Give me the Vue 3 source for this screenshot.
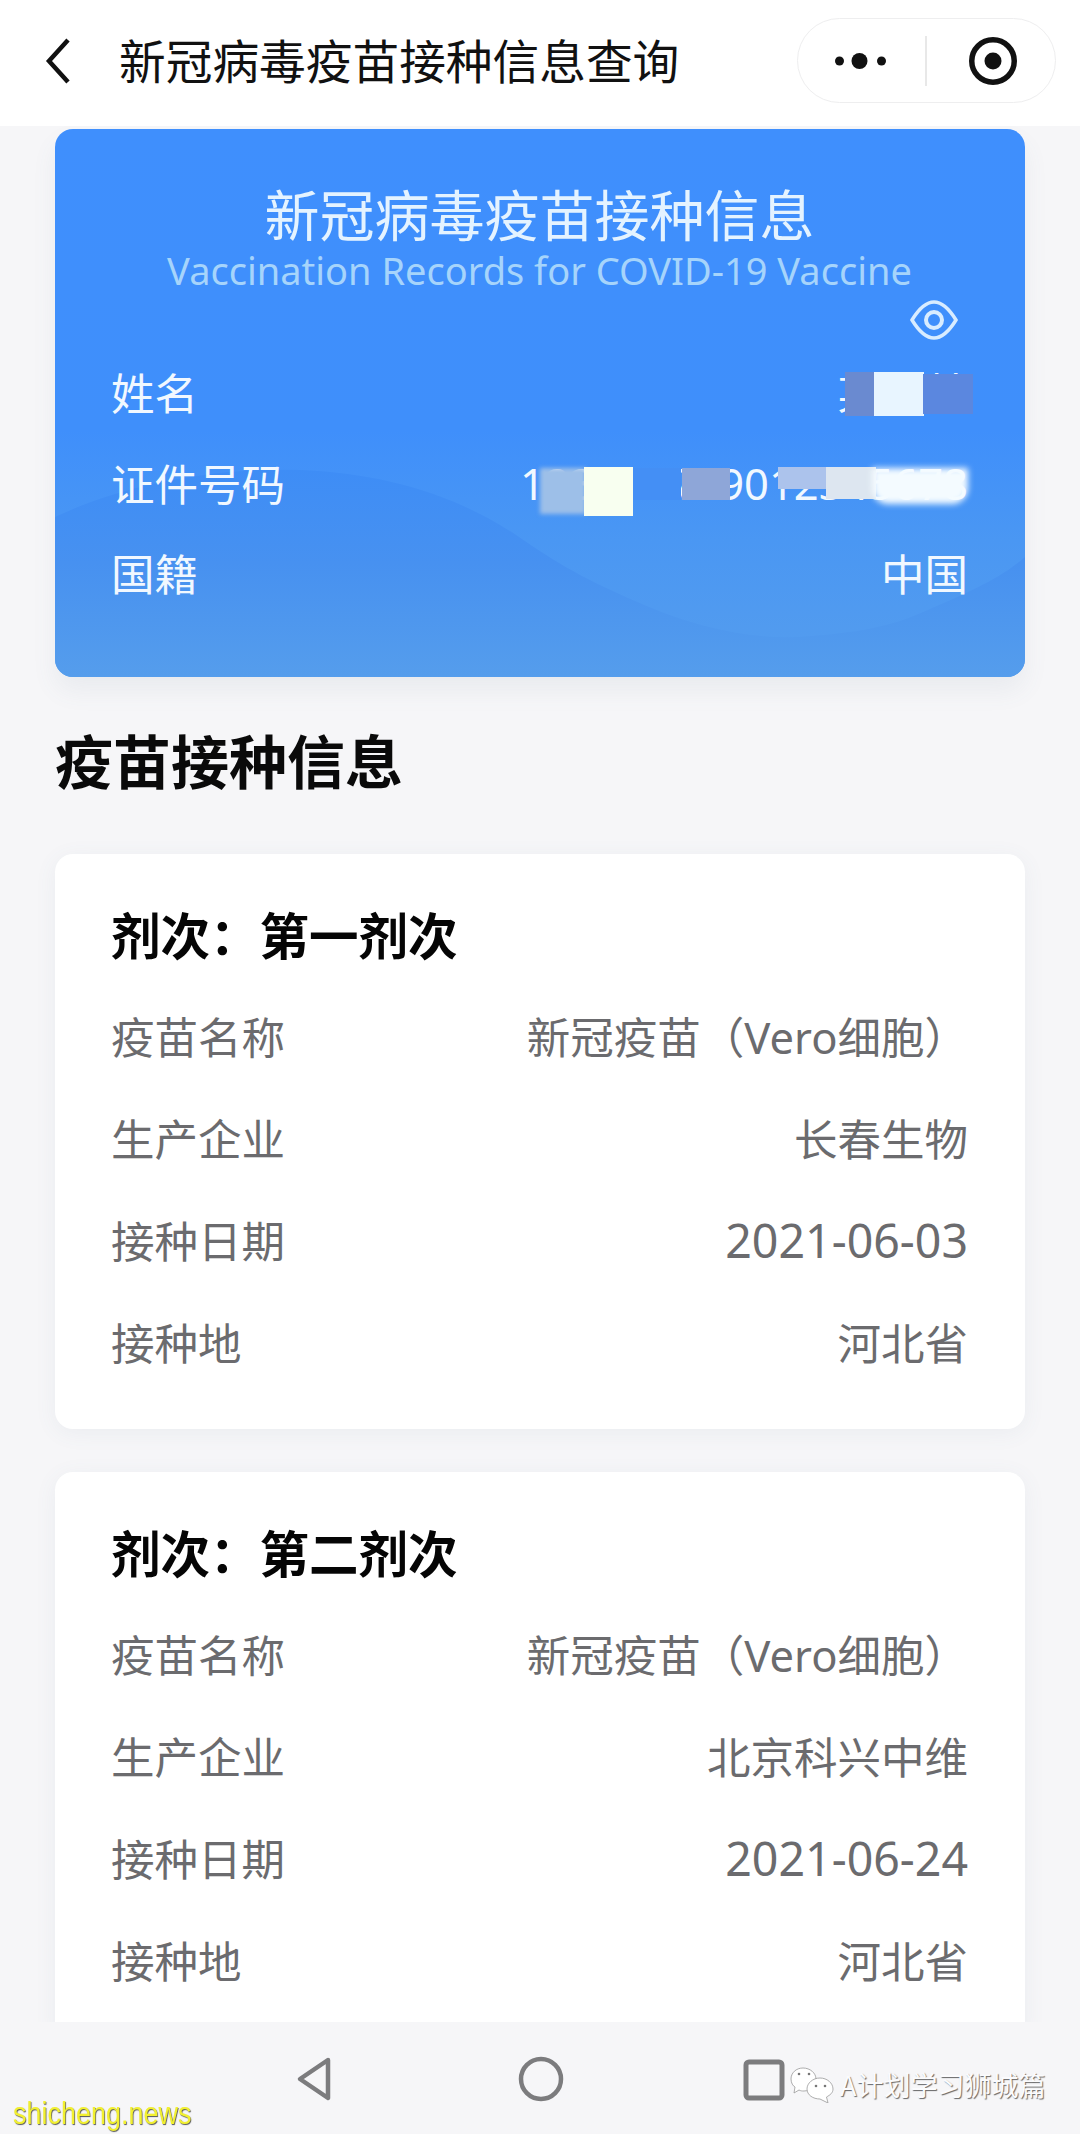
<script setup>
const doses = [
  {
    title: '剂次\uFF1A第一剂次',
    rows: [
      { label: '疫苗名称', parts: [['新冠疫苗\uFF08', ''], ['Vero', 'vero'], ['细胞\uFF09', '']] },
      { label: '生产企业', parts: [['长春生物', '']] },
      { label: '接种日期', parts: [['2021-06-03', 'latin']] },
      { label: '接种地', parts: [['河北省', '']] },
    ],
  },
  {
    title: '剂次\uFF1A第二剂次',
    rows: [
      { label: '疫苗名称', parts: [['新冠疫苗\uFF08', ''], ['Vero', 'vero'], ['细胞\uFF09', '']] },
      { label: '生产企业', parts: [['北京科兴中维', '']] },
      { label: '接种日期', parts: [['2021-06-24', 'latin']] },
      { label: '接种地', parts: [['河北省', '']] },
    ],
  },
]
</script>

<template>
  <div class="page">
    <header class="topbar">
      <svg class="back" viewBox="0 0 30 46" width="30" height="46"><path d="M25 2 L6 23 L25 44" fill="none" stroke="#111" stroke-width="4.5" stroke-linejoin="miter"/></svg>
      <h1 class="top-title">新冠病毒疫苗接种信息查询</h1>
      <div class="capsule">
        <svg viewBox="0 0 51 16" width="51" height="16"><circle cx="4.5" cy="8" r="4.5" fill="#111"/><circle cx="24.5" cy="8" r="8" fill="#111"/><circle cx="46.5" cy="8" r="4.5" fill="#111"/></svg>
        <span class="cap-sep"></span>
        <svg viewBox="0 0 50 50" width="50" height="50"><circle cx="25" cy="25" r="21.25" fill="none" stroke="#111" stroke-width="5.5"/><circle cx="25" cy="25" r="8.5" fill="#111"/></svg>
      </div>
    </header>

    <main class="main">
      <section class="id-card">
        <svg class="waves" viewBox="0 0 970 548" preserveAspectRatio="none">
          <defs>
            <linearGradient id="wa" x1="0" y1="0" x2="0" y2="1"><stop offset="0" stop-color="#3e8df6"/><stop offset=".45" stop-color="#4791f0"/><stop offset="1" stop-color="#559dec"/></linearGradient>
          </defs>
          <path d="M0 388 C70 355 160 338 247 341 C330 345 400 365 464 408 C510 440 540 455 594 478 C640 497 690 510 742 508 C790 505 830 500 866 484 C910 465 945 450 970 428 L970 548 L0 548 Z" fill="url(#wa)"/>
        </svg>
        <h2 class="id-title">新冠病毒疫苗接种信息</h2>
        <p class="id-sub">Vaccination Records for COVID-19 Vaccine</p>
        <div class="eye-row">
          <svg viewBox="0 0 48 40" width="48" height="40"><path d="M2 20 C10 7 17 2 24 2 C31 2 38 7 46 20 C38 33 31 38 24 38 C17 38 10 33 2 20 Z" fill="none" stroke="#d8ecff" stroke-width="3.5"/><circle cx="24" cy="20" r="8" fill="none" stroke="#d8ecff" stroke-width="4"/></svg>
        </div>
        <div class="id-row"><span>姓名</span>
          <span class="val-wrap">某某某
            <i class="mask m-name-a"></i><i class="mask m-name-b"></i><i class="mask m-name-c"></i>
          </span>
        </div>
        <div class="id-row"><span>证件号码</span>
          <span class="val-wrap id-num">123456789012345678
            <i class="mask m-id-a"></i><i class="mask m-id-b"></i><i class="mask m-id-c"></i><i class="mask m-id-d"></i><i class="mask m-id-e"></i><i class="mask m-id-f"></i><i class="mask m-id-g"></i>
          </span>
        </div>
        <div class="id-row last"><span>国籍</span><span class="val-wrap">中国</span></div>
      </section>

      <h2 class="section-title">疫苗接种信息</h2>

      <section v-for="d in doses" :key="d.title" class="dose">
        <h3 class="dose-title">{{ d.title }}</h3>
        <div v-for="r in d.rows" :key="r.label" class="dose-row">
          <span>{{ r.label }}</span>
          <span><span v-for="(p, i) in r.parts" :key="i" :class="p[1]">{{ p[0] }}</span></span>
        </div>
      </section>
    </main>

    <nav class="navbar">
      <svg viewBox="0 0 40 46" width="40" height="46"><path d="M34 4 L6 23 L34 42 Z" fill="none" stroke="#7c7c7e" stroke-width="4.5" stroke-linejoin="round"/></svg>
      <svg viewBox="0 0 46 46" width="46" height="46"><circle cx="23" cy="23" r="20" fill="none" stroke="#7c7c7e" stroke-width="4.5"/></svg>
      <svg class="nav-square" viewBox="0 0 42 42" width="42" height="42"><rect x="3" y="3" width="36" height="36" rx="3" fill="none" stroke="#7c7c7e" stroke-width="5"/></svg>
    </nav>

    <div class="wm-wechat">
      <svg viewBox="0 0 44 36" width="44" height="36"><path d="M13 1 C6 1 1 6 1 12 C1 16 3 19 5 20 L4 26 L9 23 C11 24 12 24 14 24 C21 24 26 18 26 12 C26 6 20 1 13 1 Z" fill="#fff" stroke="#999" stroke-width=".8"/><path d="M30 11 C23 11 17 16 17 22 C17 28 23 32 30 32 L38 36 L36.5 30 C40 28 43 26 43 22 C43 16 37 11 30 11 Z" fill="#fff" stroke="#999" stroke-width=".8"/><circle cx="9" cy="7" r="1.3" fill="#777"/><circle cx="19" cy="7" r="1.3" fill="#777"/><circle cx="26" cy="19" r="1.3" fill="#777"/><circle cx="35" cy="19" r="1.3" fill="#777"/></svg>
      <span>A计划学习狮城篇</span>
    </div>
    <div class="wm-site">shicheng.news</div>
  </div>
</template>

<style>
html, body { margin: 0; background: #f6f6f8; }
</style>

<style scoped>
.page {
  position: relative;
  width: 1080px;
  height: 2134px;
  display: flex;
  flex-direction: column;
  overflow: hidden;
  background: #f6f6f8;
  font-family: "Noto Sans CJK SC", "Noto Sans", sans-serif;
}
.topbar {
  flex: none;
  height: 126px;
  box-sizing: border-box;
  display: flex;
  align-items: center;
  padding: 0 24px 5px 43px;
  background: #fff;
}
.back { flex: none; margin-top: 1px; }
.top-title {
  margin: -3px 0 0 46px;
  flex: 1;
  font-size: 46.7px;
  line-height: 60px;
  font-weight: 400;
  color: #111;
  white-space: nowrap;
}
.capsule {
  flex: none;
  width: 259px;
  height: 85px;
  box-sizing: border-box;
  border: 1.5px solid #eeeeef;
  border-radius: 43px;
  display: flex;
  align-items: center;
  padding-left: 37px;
  background: #fff;
}
.cap-sep { flex: none; width: 1.5px; height: 50px; background: #e8e8e8; margin: 0 41px 0 39px; }
.main {
  flex: 1;
  min-height: 0;
  overflow: hidden;
  box-sizing: border-box;
  padding: 3px 55px 0;
}
.id-card {
  position: relative;
  height: 548px;
  box-sizing: border-box;
  padding: 53px 57px 0 56px;
  border-radius: 18px;
  overflow: hidden;
  color: #f1f8ff;
  background: linear-gradient(180deg, #3f8ffd 0%, #3f8ffb 55%, #4a97f3 75%, #559ded 100%);
  box-shadow: 0 14px 24px rgba(90, 110, 140, .08);
}
.waves { position: absolute; inset: 0; width: 100%; height: 100%; }
.id-title, .id-sub, .eye-row, .id-row { position: relative; }
.id-title {
  margin: 0;
  text-align: center;
  font-size: 55px;
  line-height: 60px;
  font-weight: 400;
  color: #e4f3ff;
  white-space: nowrap;
}
.id-sub {
  margin: 6px 0 0;
  text-align: center;
  font-family: "Noto Sans", sans-serif;
  font-size: 38px;
  line-height: 44px;
  color: #a6d4fb;
  white-space: nowrap;
}
.eye-row {
  display: flex;
  justify-content: flex-end;
  height: 40px;
  margin: 8px 10px 6px 0;
}
.id-row {
  display: flex;
  justify-content: space-between;
  align-items: center;
  height: 91px;
  font-size: 43.5px;
  line-height: 60px;
}
.id-row.last { margin-top: -1px; }
.val-wrap { position: relative; white-space: nowrap; }
.id-num { font-family: "Noto Sans", sans-serif; }
.mask { position: absolute; display: block; }
.m-name-a { left: 7px; width: 30px; top: 10px; height: 44px; background: #6a8ad0; }
.m-name-b { left: 36px; width: 50px; top: 10px; height: 44px; background: #e8f5ff; }
.m-name-c { left: 85px; width: 50px; top: 12px; height: 40px; background: #5b87df; }
.m-id-a { left: 20px; width: 46px; top: 15px; height: 46px; background: #9dbfe8; filter: blur(2px); }
.m-id-b { left: 64px; width: 49px; top: 14px; height: 49px; background: #f8fff0; }
.m-id-c { left: 113px; width: 48px; top: 15px; height: 32px; background: #448ff5; }
.m-id-d { left: 162px; width: 48px; top: 15px; height: 32px; background: #8ea6d8; }
.m-id-e { left: 258px; width: 48px; top: 14px; height: 22px; background: #acc3ec; }
.m-id-f { left: 306px; width: 50px; top: 14px; height: 32px; background: #dde6f0; }
.m-id-g { left: 352px; width: 96px; top: 15px; height: 36px; background: #f4fbff; filter: blur(3px); border-radius: 0 0 16px 16px; }
.section-title {
  margin: 47px 0 60px;
  font-size: 58px;
  line-height: 70px;
  font-weight: 700;
  color: #0a0a0a;
}
.dose {
  padding: 50px 57px 36px 56px;
  margin-bottom: 43px;
  background: #fff;
  border-radius: 18px;
  box-shadow: 0 4px 22px rgba(90, 110, 140, .07);
}
.dose-title {
  margin: 0 0 21px;
  font-size: 49.5px;
  line-height: 60px;
  font-weight: 700;
  color: #050505;
}
.dose-row {
  display: flex;
  justify-content: space-between;
  align-items: center;
  height: 102px;
  font-size: 43.5px;
  line-height: 60px;
  color: #6b6b6e;
  white-space: nowrap;
}
.latin { font-family: "Noto Sans", sans-serif; font-size: 46.5px; }
.vero { font-family: "Noto Sans", sans-serif; font-size: 43.5px; }
.navbar {
  flex: none;
  height: 112px;
  display: flex;
  align-items: flex-start;
  padding: 34px 0 0 294px;
  box-sizing: border-box;
  gap: 184px;
  background: #f6f6f8;
}
.nav-square { margin: 3px 0 0 -5px; }
.wm-wechat {
  position: absolute;
  left: 790px;
  top: 2067px;
  display: flex;
  align-items: center;
  gap: 6px;
  font-size: 27px;
  line-height: 36px;
  color: #fbfbfd;
  text-shadow: 1px 1px 1px #666;
  white-space: nowrap;
}
.wm-site {
  position: absolute;
  left: 13px;
  top: 2094px;
  font-family: "Liberation Sans", sans-serif;
  font-size: 31px;
  line-height: 40px;
  color: #f2f030;
  text-shadow: 1px 1px 1px #555;
  white-space: nowrap;
  transform: scaleX(.87);
  transform-origin: left center;
}
</style>
